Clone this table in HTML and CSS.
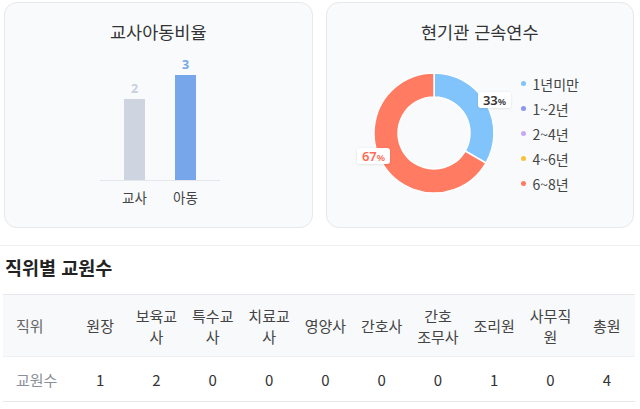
FILE: index.html
```html
<!DOCTYPE html>
<html lang="ko">
<head>
<meta charset="utf-8">
<link rel="stylesheet" href="styles.css">
</head>
<body>
<div class="page">
  <div class="cards">
    <section class="card">
      <h2 class="card-title">교사아동비율</h2>
      <svg class="bar-chart" width="308" height="180" viewBox="0 0 308 180">
        <line x1="95" y1="135.5" x2="215" y2="135.5" stroke="#e3e6ea" stroke-width="1"/>
        <rect x="119" y="54" width="21" height="81" fill="#ced4e0"/>
        <rect x="170" y="30" width="21" height="105" fill="#77a7ea"/>
        <text x="129.5" y="47.5" class="bar-val" fill="#c9cfdc">2</text>
        <text x="180.5" y="24" class="bar-val" fill="#77a7ea">3</text>
        <text x="129.5" y="158" class="bar-cat">교사</text>
        <text x="180.5" y="158" class="bar-cat">아동</text>
      </svg>
    </section>
    <section class="card">
      <h2 class="card-title">현기관 근속연수</h2>
      <div class="donut-row">
        <svg class="donut" width="186" height="180" viewBox="0 0 186 180">
          <defs>
            <filter id="sh" x="-30%" y="-40%" width="160%" height="180%">
              <feDropShadow dx="0" dy="0.5" stdDeviation="1" flood-color="#000" flood-opacity="0.12"/>
            </filter>
          </defs>
          <path d="M107 28 A60 60 0 0 1 158.96 118 L138.18 106 A36 36 0 0 0 107 52 Z" fill="#80c4fb" stroke="#fff" stroke-width="1.5"/>
          <path d="M158.96 118 A60 60 0 1 1 107 28 L107 52 A36 36 0 1 0 138.18 106 Z" fill="#ff7b62" stroke="#fff" stroke-width="1.5"/>
          <rect x="151" y="47" width="33" height="16" rx="3" fill="#fff" filter="url(#sh)"/>
          <text x="167.5" y="60" class="pct" fill="#333">33<tspan class="pct-sign">%</tspan></text>
          <rect x="30" y="103" width="33" height="16" rx="3" fill="#fff" filter="url(#sh)"/>
          <text x="46.5" y="116" class="pct" fill="#ff6b55">67<tspan class="pct-sign">%</tspan></text>
        </svg>
        <ul class="legend">
          <li><span class="dot" style="background:#80c4fb"></span>1년미만</li>
          <li><span class="dot" style="background:#8a96f2"></span>1~2년</li>
          <li><span class="dot" style="background:#c7a9f4"></span>2~4년</li>
          <li><span class="dot" style="background:#fcc03a"></span>4~6년</li>
          <li><span class="dot" style="background:#ff7b62"></span>6~8년</li>
        </ul>
      </div>
    </section>
  </div>
  <hr class="divider">
  <h3 class="section-title">직위별 교원수</h3>
  <table class="staff">
    <colgroup>
      <col class="c-first">
      <col><col><col><col><col><col><col><col><col><col>
    </colgroup>
    <thead>
      <tr>
        <th class="first">직위</th>
        <th>원장</th>
        <th>보육교사</th>
        <th>특수교사</th>
        <th>치료교사</th>
        <th>영양사</th>
        <th>간호사</th>
        <th>간호<br>조무사</th>
        <th>조리원</th>
        <th>사무직원</th>
        <th>총원</th>
      </tr>
    </thead>
    <tbody>
      <tr>
        <td class="first">교원수</td>
        <td>1</td><td>2</td><td>0</td><td>0</td><td>0</td><td>0</td><td>0</td><td>1</td><td>0</td><td>4</td>
      </tr>
    </tbody>
  </table>
</div>
</body>
</html>
```
FILE: styles.css
```css
* { box-sizing: border-box; }
html, body {
  margin: 0;
  padding: 0;
  background: #fff;
  font-family: "Noto Sans CJK KR", "Noto Sans", sans-serif;
  color: #333;
}
.page {
  width: 640px;
  padding-top: 2px;
}
.cards {
  display: flex;
  gap: 13px;
  padding: 0 6px 0 4px;
}
.card {
  flex: 1;
  height: 226px;
  background: #f8fafc;
  border: 1px solid #e6e8ec;
  border-radius: 13px;
  overflow: hidden;
}
.card-title {
  margin: 0;
  padding-top: 16px;
  height: 42px;
  font-size: 17.5px;
  font-weight: 400;
  line-height: 26px;
  text-align: center;
  color: #333;
}
.bar-chart, .donut { display: block; }
.bar-val {
  font-family: "Noto Sans", sans-serif;
  font-size: 12.5px;
  font-weight: 700;
  text-anchor: middle;
}
.bar-cat {
  font-size: 13.5px;
  fill: #444;
  text-anchor: middle;
}
.donut-row {
  display: flex;
  align-items: flex-start;
}
.pct {
  font-family: "Noto Sans", sans-serif;
  font-size: 13px;
  font-weight: 600;
  text-anchor: middle;
}
.pct-sign { font-size: 9.5px; }
.legend {
  list-style: none;
  margin: 26px 0 0 8px;
  padding: 0;
}
.legend li {
  display: flex;
  align-items: center;
  height: 25px;
  font-size: 14px;
  color: #444;
}
.dot {
  width: 5px;
  height: 5px;
  border-radius: 50%;
  margin-right: 7px;
}
.divider {
  border: 0;
  border-top: 1px solid #eeeff1;
  margin: 17px 0 0 0;
}
.section-title {
  margin: 0;
  padding: 8px 0 0 5px;
  height: 48px;
  font-size: 18.5px;
  font-weight: 700;
  line-height: 26px;
  color: #222;
}
.staff {
  margin-left: 3px;
  width: 632px;
  table-layout: fixed;
  border-collapse: collapse;
  font-size: 15px;
}
.c-first { width: 69px; }
.staff th, .staff td {
  padding: 0 6px;
  text-align: center;
  line-height: 21px;
  font-weight: 400;
}
.staff thead tr {
  background: #f8f9fb;
  border-top: 1px solid #e6e8eb;
  border-bottom: 1px solid #eef0f2;
}
.staff th {
  height: 62px;
  color: #444;
}
.staff td {
  height: 45px;
  color: #333;
}
.staff tbody tr { border-bottom: 1px solid #e6e8eb; }
.staff .first {
  text-align: left;
  padding-left: 13px;
}
.staff th.first { color: #666; }
.staff td.first { color: #8a8f98; }
```
